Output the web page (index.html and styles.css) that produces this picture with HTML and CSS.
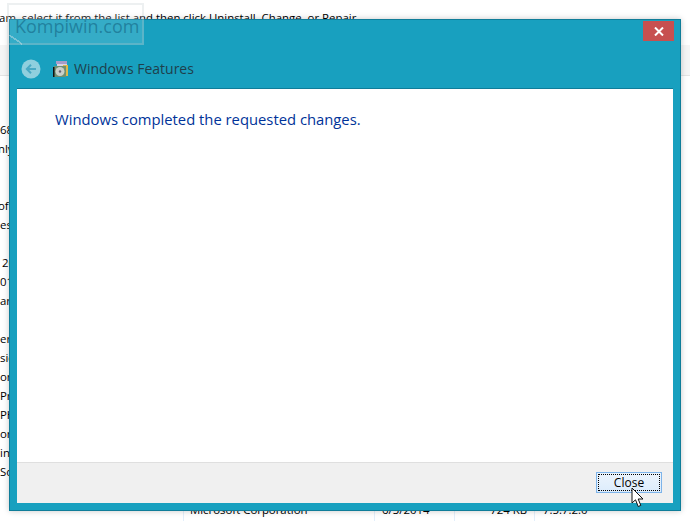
FILE: index.html
```html
<!DOCTYPE html>
<html lang="en">
<head>
<meta charset="utf-8">
<title>Windows Features</title>
<link rel="stylesheet" href="styles.css">
</head>
<body>
<div class="page">
  <p class="intro">To uninstall a program, select it from the list and then click Uninstall, Change, or Repair.</p>
  <div class="toolbar"></div>
  <div class="list">
    <div class="row"><span class="name">68</span></div>
    <div class="row"><span class="name shift">nly</span></div>
    <div class="row"></div>
    <div class="row"></div>
    <div class="row"><span class="name shift">ofi</span></div>
    <div class="row"><span class="name">es</span></div>
    <div class="row"></div>
    <div class="row"><span class="name indent">20</span></div>
    <div class="row"><span class="name">01</span></div>
    <div class="row"><span class="name">ar</span></div>
    <div class="row"></div>
    <div class="row"><span class="name">er</span></div>
    <div class="row"><span class="name">sic</span></div>
    <div class="row"><span class="name">on</span></div>
    <div class="row"><span class="name">Pri</span></div>
    <div class="row"><span class="name">PH</span></div>
    <div class="row"><span class="name">or</span></div>
    <div class="row"><span class="name">in</span></div>
    <div class="row"><span class="name">So</span></div>
    <div class="row"></div>
    <div class="row">
      <span class="name"></span>
      <span class="cell publisher">Microsoft Corporation</span>
      <span class="cell date">6/3/2014</span>
      <span class="cell size">724 KB</span>
      <span class="cell version">7.5.7.2.0</span>
    </div>
  </div>
</div>

<section class="dialog">
  <header class="titlebar">
    <button class="close-x" type="button" aria-label="Close">
      <svg width="10" height="9" viewBox="0 0 10 9"><path d="M1 .5 9 8.500M9 .5 1 8.500" stroke="#fff" stroke-width="2" fill="none"/></svg>
    </button>
  </header>
  <div class="navbar">
    <svg class="back" width="20" height="20" viewBox="0 0 20 20">
      <circle cx="10" cy="10" r="9.500" fill="#8fcfde"/>
      <path d="M15 10H6M10 5.800 5.800 10 10 14.200" stroke="#4aa9c4" stroke-width="2" fill="none"/>
    </svg>
    <svg class="app-icon" width="16" height="16" viewBox="0 0 16 16">
      <rect x="3" y="0" width="11" height="3" fill="#a89cc8"/>
      <rect x="4" y="3" width="10" height="2" fill="#d8d4e4"/>
      <rect x="10" y="4" width="5" height="11" fill="#e0b84a"/>
      <rect x="1" y="5" width="12" height="11" fill="#6f8f72"/>
      <rect x="0" y="6" width="1.500" height="10" fill="#111"/>
      <circle cx="7" cy="10.500" r="4.500" fill="#c9cfc9"/>
      <circle cx="7" cy="10.500" r="1.200" fill="#667"/>
    </svg>
    <span class="dialog-title">Windows Features</span>
  </div>
  <div class="content">
    <p class="message">Windows completed the requested changes.</p>
  </div>
  <footer class="footer">
    <button class="close-btn" type="button"><span class="focus">Close</span></button>
  </footer>
</section>

<div class="watermark"><span class="wm-text">Kompiwin.com</span><i class="wm-tail"></i></div>

<svg class="cursor" width="14" height="21" viewBox="0 0 14 21">
  <path d="M1 1V16L4.500 12.800 7.200 19.500 9.800 18.400 7.200 12H12Z" fill="#fff" stroke="#111" stroke-width="1"/>
</svg>
</body>
</html>
```

FILE: styles.css
```css
* { box-sizing: border-box; }

html, body {
  margin: 0;
  height: 100%;
  overflow: hidden;
  background: #fff;
}

body {
  width: 690px;
  height: 521px;
  font-family: "Open Sans", "Noto Sans", "Liberation Sans", sans-serif;
  color: #000;
}

.page {
  display: flex;
  flex-direction: column;
  height: 521px;
  overflow: hidden;
}

.intro {
  margin: 0 0 0 -104px;
  height: 45px;
  padding-top: 9px;
  font-size: 11.400px;
  line-height: 18px;
  white-space: nowrap;
}

.toolbar {
  height: 31px;
  background: #f5f5f5;
  border-bottom: 1px solid #e4e4e4;
}

.list {
  padding-top: 44px;
  font-size: 11.400px;
  line-height: 19px;
}

.row {
  display: flex;
  height: 19px;
  white-space: nowrap;
}

.name {
  flex: 0 0 9px;
  width: 9px;
  margin-right: 174px;
}

.name.shift { text-indent: -2px; }
.name.indent { text-indent: 2px; }

.cell {
  display: block;
  height: 21px;
  padding-left: 6px;
  border-left: 1px solid #e3effb;
}

.publisher { width: 191px; }
.date { width: 80px; padding-left: 7px; }
.size { width: 80px; padding: 0 7px 0 0; text-align: right; }
.version { width: 100px; padding-left: 8px; }

.dialog {
  position: absolute;
  left: 9px;
  top: 19px;
  width: 672px;
  height: 492px;
  display: flex;
  flex-direction: column;
  padding: 1px 7px 7px 7px;
  background: #18a0bf;
  border: 1px solid #0f7d99;
  box-shadow: 0 0 6px rgba(0, 0, 0, 0.22);
}

.titlebar {
  display: flex;
  justify-content: flex-end;
  flex: none;
  height: 20px;
  margin-right: -1px;
}

.close-x {
  width: 31px;
  height: 20px;
  margin: 0;
  padding: 0;
  border: 0;
  background: #c75050;
  display: flex;
  align-items: center;
  justify-content: center;
}

.navbar {
  flex: none;
  height: 47px;
  display: flex;
  align-items: center;
  gap: 12px;
  padding-top: 9px;
  margin-left: 4px;
}

.back { flex: none; }

.app-icon { flex: none; margin-right: -7px; }

.dialog-title {
  font-size: 14px;
  line-height: 20px;
  color: #1f3f4c;
  white-space: nowrap;
}

.content {
  flex: 1;
  background: #fff;
  border-top: 1px solid #0f7d99;
  padding: 20px 38px;
}

.message {
  margin: 0;
  font-size: 14.800px;
  line-height: 21px;
  color: #003399;
  white-space: nowrap;
}

.footer {
  flex: none;
  height: 41px;
  background: #f0f0f0;
  border-top: 1px solid #dfdfdf;
  display: flex;
  justify-content: flex-end;
  align-items: flex-start;
  padding: 9px 11px 0 0;
}

.close-btn {
  width: 66px;
  height: 21px;
  padding: 1px;
  margin: 0;
  border: 1px solid #7eb4ea;
  background: linear-gradient(#ecf4fc, #dcecfc);
  font-family: "Open Sans", "Liberation Sans", sans-serif;
  font-size: 12px;
  line-height: 15px;
  color: #000;
}

.focus {
  display: block;
  height: 17px;
  line-height: 15px;
  border: 1px dotted #000;
}

.watermark {
  position: absolute;
  left: 7px;
  top: 3px;
  width: 137px;
  height: 42px;
  background: rgba(255, 255, 255, 0.13);
  border: 2px solid rgba(190, 200, 205, 0.28);
}

.wm-text {
  display: block;
  padding: 7px 0 0 6px;
  font-size: 18px;
  line-height: 28px;
  color: rgba(20, 100, 130, 0.6);
  white-space: nowrap;
}

.wm-tail {
  position: absolute;
  left: -1px;
  top: 30px;
  width: 14px;
  height: 10px;
  background: linear-gradient(to top right, transparent 50%, rgba(210, 225, 230, 0.45) 50%, rgba(210, 225, 230, 0.45) 60%, transparent 60%);
}

.cursor {
  position: absolute;
  left: 631px;
  top: 487px;
}
```
